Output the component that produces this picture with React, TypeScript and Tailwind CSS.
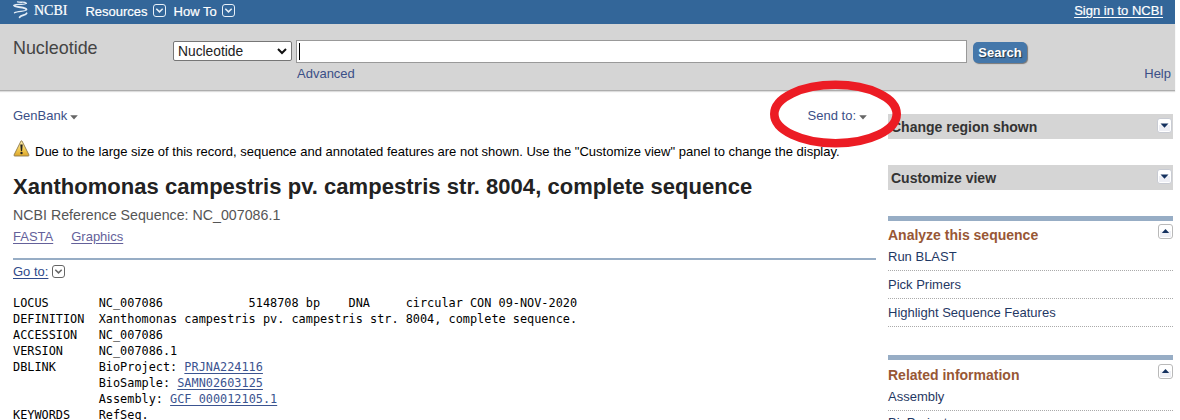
import type { ReactNode } from 'react';

function HelixLogo() {
  return (
    <svg width="16" height="19" viewBox="0 0 16 19" fill="none" stroke="#e4edf6" strokeLinecap="round" className="block shrink-0">
      <path d="M4.500 1.800C7.500 3 11.500 1.200 13.300 3.300" strokeWidth="1.300" />
      <path d="M13.300 3.300C12 5.500 3 3 1.200 5.500" strokeWidth="1.200" />
      <path d="M1.200 5.500C3 8 12.800 6.300 13.400 9.500" strokeWidth="2" />
      <path d="M13.400 9.500C13 12 4.500 10.600 1.500 12.800" strokeWidth="1.300" />
      <path d="M13.600 13.300C12.500 15.500 8.500 14.500 6.600 17.200" strokeWidth="1.800" />
    </svg>
  );
}

function ChevronBox({ color, fill }: { color: string; fill: string }) {
  return (
    <svg width="13" height="13" viewBox="0 0 13 13" fill="none" stroke={color} className="block shrink-0">
      <rect x="0.5" y="0.5" width="12" height="12" rx="2.5" fill={fill} />
      <path d="M3.300 4.700L6.500 7.900L9.700 4.700" strokeWidth="1.500" />
    </svg>
  );
}

function Caret() {
  return (
    <svg width="8" height="5" viewBox="0 0 8 5" className="block shrink-0">
      <path d="M0.200 0.300H7.800L4 4.600Z" fill="#666" />
    </svg>
  );
}

function Toggle({ up = false }: { up?: boolean }) {
  return (
    <svg width="15" height="15" viewBox="0 0 15 15" className="block shrink-0">
      <rect x="0.5" y="0.5" width="14" height="14" rx="2.500" fill="#fff" stroke={up ? '#b9b9b9' : '#c8cbd3'} />
      <rect x="2" y="7" width="11" height="6" fill="#eeeff5" />
      <path d={up ? 'M3.800 9H11.200L7.500 5Z' : 'M3.500 5.500H11.500L7.500 9.700Z'} fill="#14315f" />
    </svg>
  );
}

function Warning() {
  return (
    <svg width="17" height="17" viewBox="0 0 17 17" className="block shrink-0">
      <defs>
        <linearGradient id="amber" x1="0" y1="0" x2="0" y2="1">
          <stop offset="0" stopColor="#fff3b8" />
          <stop offset="0.6" stopColor="#f1c84e" />
          <stop offset="1" stopColor="#dba52c" />
        </linearGradient>
      </defs>
      <path d="M8 1Q8.500 0.500 9 1L16 15Q16.200 16 15.200 16H1.800Q0.800 16 1 15Z" fill="url(#amber)" stroke="#8f7a4c" strokeWidth="0.9" />
      <path d="M7.300 4.500H9.700L9.100 11H7.900Z" fill="#222" />
      <circle cx="8.500" cy="13" r="1.200" fill="#222" />
    </svg>
  );
}

function RegionBar({ title }: { title: string }) {
  return (
    <div className="flex h-[25px] items-start justify-between bg-[#d5d5d5] pl-[3px] pr-[1px]">
      <span className="pt-[5px] text-[14px] font-bold leading-4 text-[#333]">{title}</span>
      <div className="pt-1">
        <Toggle />
      </div>
    </div>
  );
}

function Portlet({ title, links, compact = false }: { title: string; links: string[]; compact?: boolean }) {
  return (
    <section className="border-t-[5px] border-[#97adc5]">
      <div className={compact ? 'flex h-[29px] items-start justify-between pt-px' : 'flex h-7 items-start justify-between'}>
        <h2 className="pt-[6px] text-[14px] font-bold leading-4 text-[#985735]">{title}</h2>
        <div className="pt-[3px]">
          <Toggle up />
        </div>
      </div>
      <div className={compact ? 'flex flex-col gap-1' : 'flex flex-col gap-[6px]'}>
        {links.map((l) => (
          <a key={l} className="flex h-[22px] items-start border-b border-dotted border-[#aaa] leading-4 text-[#1f3864]">
            {l}
          </a>
        ))}
      </div>
    </section>
  );
}

function Link({ children }: { children: ReactNode }) {
  return <a className="text-[#3b5490] underline underline-offset-2">{children}</a>;
}

export default function App() {
  return (
    <div className="relative h-[420px] w-[1180px] overflow-hidden bg-white font-['Liberation_Sans',Arial,sans-serif] text-[13px] leading-4">
      <header className="w-[1175px]">
        <nav className="flex h-6 items-start bg-[#336699] pl-[13px] pr-3 text-white">
          <HelixLogo />
          <span className="ml-[5px] mt-[3px] font-['Liberation_Serif',serif] text-[14px] leading-4 [-webkit-text-stroke:0.2px]">NCBI</span>
          <span className="ml-[18px] mt-1 [-webkit-text-stroke:0.2px]">Resources</span>
          <div className="ml-[5px] mt-1"><ChevronBox color="#e8f0f8" fill="none" /></div>
          <span className="ml-[8px] mt-1 [-webkit-text-stroke:0.2px]">How To</span>
          <div className="ml-[5px] mt-1"><ChevronBox color="#e8f0f8" fill="none" /></div>
          <a className="ml-auto mt-[3px] underline underline-offset-2 [-webkit-text-stroke:0.2px]">Sign in to NCBI</a>
        </nav>
        <div className="flex h-[67px] items-start border-b border-[#adadad] bg-[#d5d5d5] pl-[13px] pr-1 shadow-[0_1px_1px_#ddd]">
          <h1 className="mt-[14px] w-[160px] text-[17.900px] leading-5 text-[#444]">Nucleotide</h1>
          <div className="mt-[17px] flex h-5 w-[119px] items-center justify-between rounded-[2px] border border-[#767676] bg-white pl-1 pr-1">
            <span className="pt-px text-[13.800px] text-[#222]">Nucleotide</span>
            <svg width="10" height="7" viewBox="0 0 10 7" fill="none" stroke="#111" strokeWidth="2"><path d="M1 1L5 5L9 1" /></svg>
          </div>
          <div className="ml-1 mt-4 w-[671px]">
            <div className="flex h-[23px] items-center border border-[#999] bg-white pl-[2px]">
              <span className="h-[17px] w-px bg-black" />
            </div>
            <a className="mt-[3px] block pl-px text-[#3b4f87]">Advanced</a>
          </div>
          <button className="ml-[6px] mt-[18px] h-[21px] w-[54px] rounded-[5px] bg-[#4477aa] text-[13px] font-bold leading-5 text-white shadow-[1px_1px_1px_#777] [text-shadow:1px_1px_1px_#234]">Search</button>
          <a className="ml-auto mt-[42px] text-[#3b4f87]">Help</a>
        </div>
      </header>

      <div className="flex items-start pl-[13px]">
        <main className="w-[863px]">
          <div className="mt-[17px] flex justify-between pr-[9px] text-[#3b4f87]">
            <a className="flex items-start gap-[3px]">GenBank<span className="pt-[7px]"><Caret /></span></a>
            <a className="flex items-start gap-[3px]">Send to:<span className="pt-[7px]"><Caret /></span></a>
          </div>
          <div className="mt-4 flex h-5 items-start">
            <Warning />
            <p className="ml-[5px] mt-1 whitespace-nowrap text-black">Due to the large size of this record, sequence and annotated features are not shown. Use the "Customize view" panel to change the display.</p>
          </div>
          <h2 className="mt-[15px] whitespace-nowrap text-[22px] font-bold leading-6 tracking-[0.035px] text-[#222]">Xanthomonas campestris pv. campestris str. 8004, complete sequence</h2>
          <p className="mt-2 text-[14.200px] leading-4 tracking-[0.020px] text-[#555]">NCBI Reference Sequence: NC_007086.1</p>
          <div className="mt-[6px] flex gap-[18px] text-[#64619a]">
            <a className="underline underline-offset-2">FASTA</a>
            <a className="underline underline-offset-2">Graphics</a>
          </div>
          <div className="mt-[13px] h-[2px] bg-[#97adc5]" />
          <div className="mt-[4px] flex items-start text-[#2f4a8b]">
            <a className="underline underline-offset-2">Go to:</a>
            <div className="ml-[4px] mt-[1px]"><ChevronBox color="#666" fill="#fff" /></div>
          </div>
          <pre className="mt-[15px] font-['DejaVu_Sans_Mono',monospace] text-[11.870px] leading-4 text-black">
            {'LOCUS       NC_007086            5148708 bp    DNA     circular CON 09-NOV-2020\n'}
            {'DEFINITION  Xanthomonas campestris pv. campestris str. 8004, complete sequence.\n'}
            {'ACCESSION   NC_007086\n'}
            {'VERSION     NC_007086.1\n'}
            {'DBLINK      BioProject: '}<Link>PRJNA224116</Link>{'\n'}
            {'            BioSample: '}<Link>SAMN02603125</Link>{'\n'}
            {'            Assembly: '}<Link>GCF_000012105.1</Link>{'\n'}
            {'KEYWORDS    RefSeq.\n'}
          </pre>
        </main>

        <aside className="ml-3 w-[285px] pt-[23px]">
          <RegionBar title="Change region shown" />
          <div className="mt-[26px]"><RegionBar title="Customize view" /></div>
          <div className="mt-[26px]"><Portlet title="Analyze this sequence" links={['Run BLAST', 'Pick Primers', 'Highlight Sequence Features']} /></div>
          <div className="mt-[28px]"><Portlet compact title="Related information" links={['Assembly', 'BioProject']} /></div>
        </aside>
      </div>

      <svg width="132" height="68" viewBox="0 0 132 68" className="pointer-events-none absolute left-[770px] top-[80px]">
        <ellipse cx="65.500" cy="34" rx="61.200" ry="29.200" fill="none" stroke="#ec1c24" strokeWidth="8.600" />
      </svg>
    </div>
  );
}
